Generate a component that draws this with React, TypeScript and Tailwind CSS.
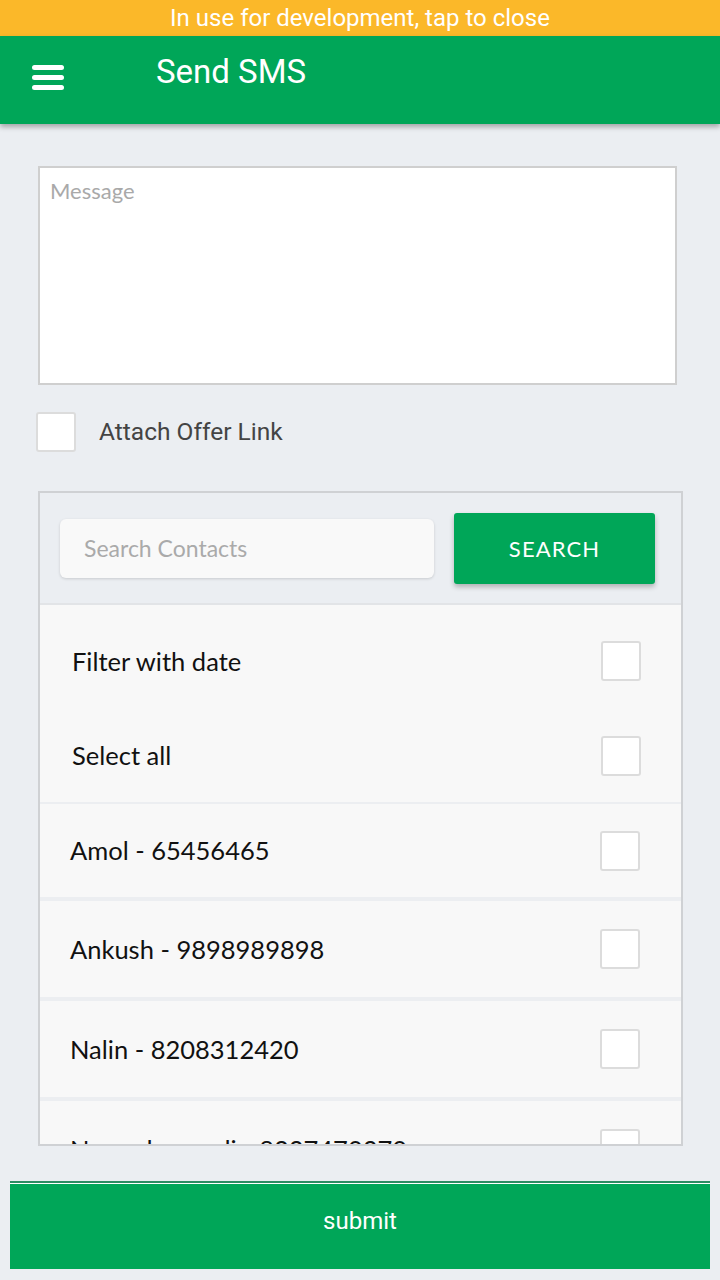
import React from 'react';

const contacts = [
  { name: 'Amol', phone: '65456465' },
  { name: 'Ankush', phone: '9898989898' },
  { name: 'Nalin', phone: '8208312420' },
  { name: 'Narendra modi', phone: '8237470370' },
];

function Box() {
  return <div className="w-10 h-10 rounded-[3px] border-2 border-[#dcdcdc] bg-white shrink-0"></div>;
}

export default function App() {
  return (
    <div className="w-[720px] h-[1280px] bg-[#ebeef2] flex flex-col overflow-hidden font-['Roboto',sans-serif]">
      {/* dev banner */}
      <div className="h-9 bg-[#fbb829] text-white text-[24px] flex items-center justify-center leading-none">
        In use for development, tap to close
      </div>

      {/* app bar */}
      <div className="h-[88px] bg-[#00a658] flex items-start shadow-[0_3px_5px_rgba(0,0,0,0.3)] relative z-10">
        <div className="ml-8 mt-[29px] w-8 flex flex-col gap-[5px]">
          <span className="block h-[5px] rounded-full bg-white"></span>
          <span className="block h-[5px] rounded-full bg-white"></span>
          <span className="block h-[5px] rounded-full bg-white"></span>
        </div>
        <h1 className="ml-[92px] mt-[18px] text-white text-[33px] leading-9">Send SMS</h1>
      </div>

      <div className="px-[38px] pt-[42px] flex flex-col">
        <div className="h-[219px] mr-[5px] border-2 border-[#cfcfcf] bg-white px-[10px] pt-[6px]">
          <span className="text-[#a9a9a9] text-[22px] font-['Lato',sans-serif]">Message</span>
        </div>

        <div className="mt-[27px] -ml-[2px] flex items-center gap-[23px]">
          <Box />
          <span className="text-[#444] text-[24.5px] font-['Roboto',sans-serif]">Attach Offer Link</span>
        </div>

        <div className="mt-[39px] mr-[-1px] h-[655px] border-2 border-[#cfd1d4] flex flex-col overflow-hidden font-['Lato',sans-serif]">
          <div className="h-[112px] bg-[#ebeef2] flex items-center pl-5 pr-6 gap-5 border-b-2 border-[#e2e4e7] shrink-0">
            <div className="w-[374px] h-[59px] rounded-md bg-[#f9f9f9] shadow-[0_1px_3px_rgba(0,0,0,0.15)] flex items-center px-6 text-[#aaa] text-[23px]">
              Search Contacts
            </div>
            <div className="w-[201px] h-[71px] rounded-[3px] bg-[#00a658] shadow-[0_3px_5px_rgba(0,0,0,0.25)] flex items-center justify-center text-white text-[22px] tracking-wider">
              SEARCH
            </div>
          </div>

          <div className="bg-[#f8f8f8] border-b-2 border-[#eceef1] shrink-0">
            <div className="h-[96px] mt-[8px] flex items-center justify-between pl-8 pr-[40px] text-[#111] text-[25.5px]">
              <span>Filter with date</span>
              <Box />
            </div>
            <div className="h-[93px] flex items-center justify-between pl-8 pr-[40px] text-[#111] text-[25.5px]">
              <span>Select all</span>
              <Box />
            </div>
          </div>

          <div className="flex flex-col gap-1 bg-[#eceef1]">
            {contacts.map((c, i) => (
              <div
                key={c.phone}
                className={(i === 0 ? 'h-[93px] ' : 'h-24 ') + 'bg-[#f8f8f8] flex items-center justify-between pl-[30px] pr-[41px] text-[#111] text-[25.5px] shrink-0'}
              >
                <span>{c.name} - {c.phone}</span>
                <Box />
              </div>
            ))}
          </div>
        </div>
      </div>

      <div className="mx-[10px] mt-[35px] h-[88px] pb-[10px] bg-[#00a658] border-t-2 border-[#2c8c62] flex items-center justify-center text-white text-[24px] shadow-[inset_0_1px_0_#ffffff]">
        submit
      </div>
    </div>
  );
}
